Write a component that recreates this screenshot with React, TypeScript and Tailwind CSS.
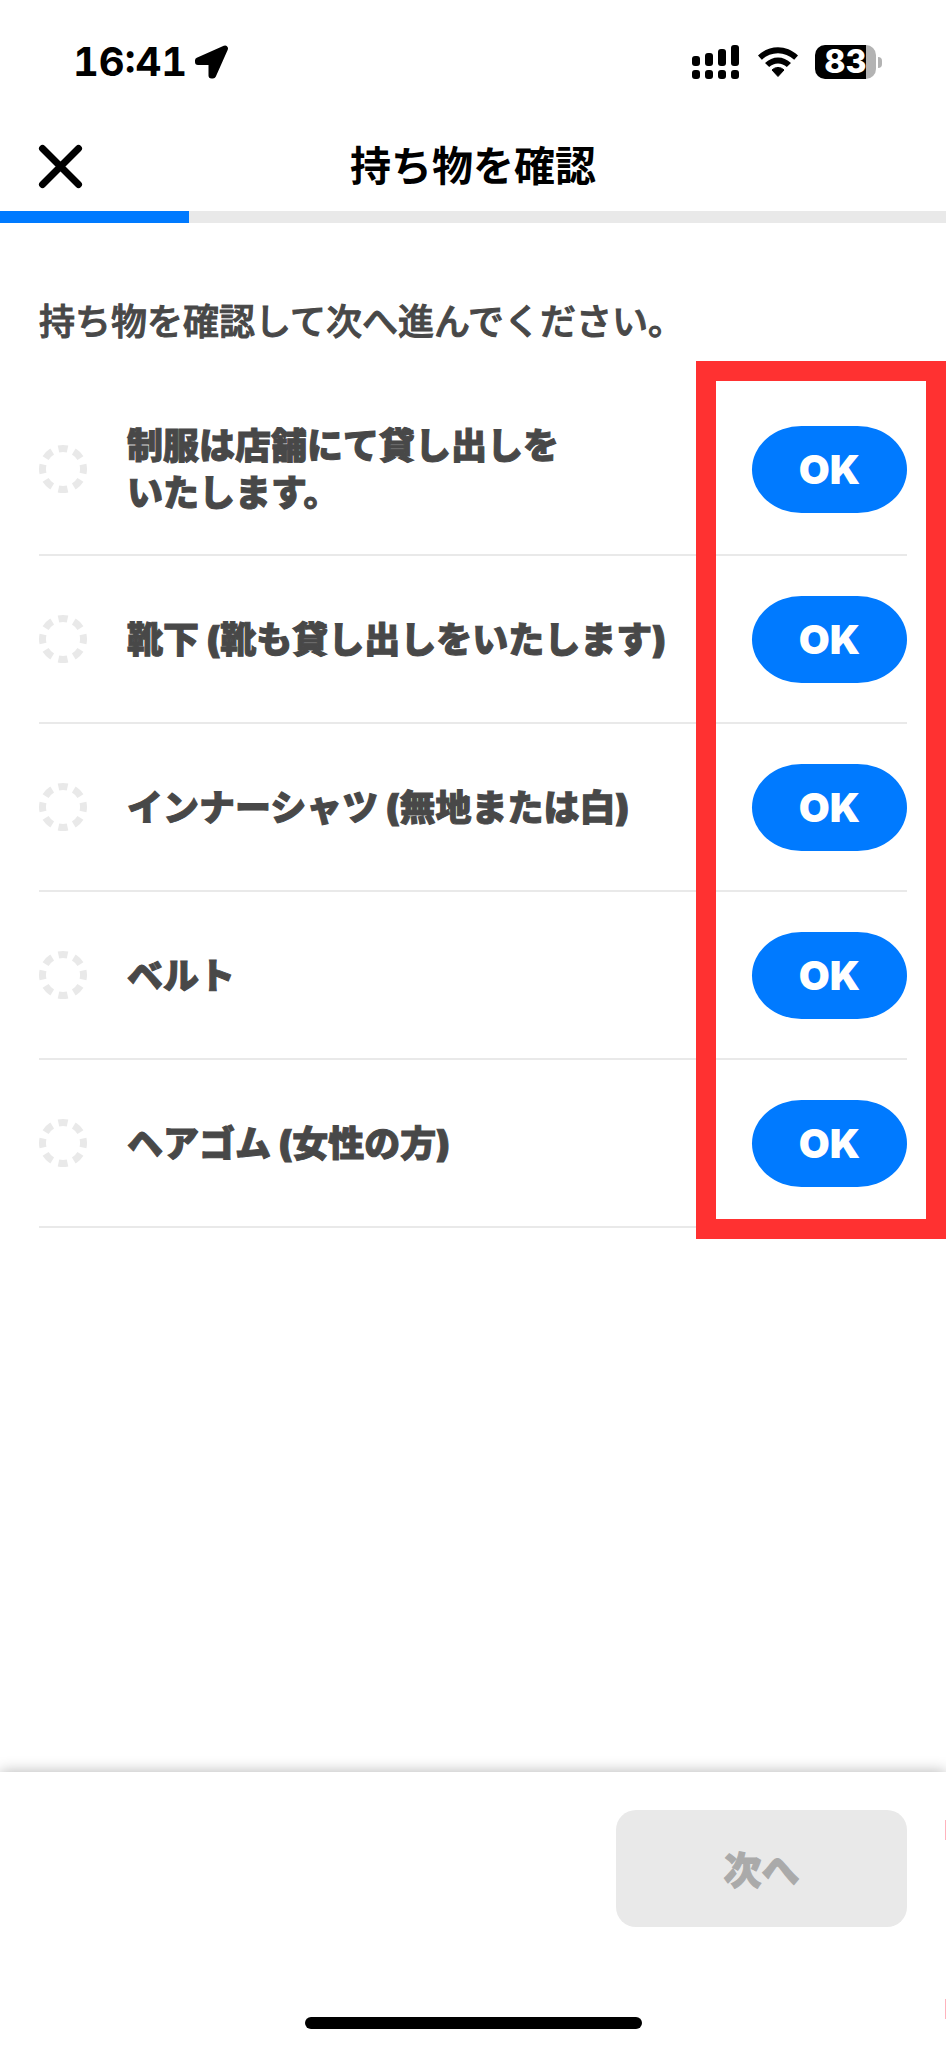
import { useState } from "react";

const items = [
  ["制服は店舗にて貸し出しを", "いたします。"],
  ["靴下 (靴も貸し出しをいたします)"],
  ["インナーシャツ (無地または白)"],
  ["ベルト"],
  ["ヘアゴム (女性の方)"],
];

function StatusBar() {
  return (
    <div className="flex h-[124px] items-center justify-between pr-16 pl-[73px]">
      <div className="flex items-center gap-[6px]">
        <span className="text-[40px] leading-none font-bold tabular-nums">16:41</span>
        <svg width="36" height="36" viewBox="0 0 36 36" aria-hidden="true">
          <path
            d="M32 4.500 L20 31.500 L18.500 31.500 L18.500 18 L5 18 L5 16.500 Z"
            stroke="black"
            strokeWidth="6"
            strokeLinejoin="round"
          />
        </svg>
      </div>
      <div className="flex items-center gap-4">
        <svg width="49" height="34" viewBox="0 0 49 34" aria-hidden="true">
          <rect x="0" y="11" width="8" height="10" rx="3" />
          <rect x="13" y="8" width="8" height="13" rx="3" />
          <rect x="26" y="4" width="8" height="17" rx="3" />
          <rect x="39" y="0" width="8" height="21" rx="3" />
          <rect x="0" y="25" width="8" height="9" rx="3" />
          <rect x="13" y="25" width="8" height="9" rx="3" />
          <rect x="26" y="25" width="8" height="9" rx="3" />
          <rect x="39" y="25" width="8" height="9" rx="3" />
        </svg>
        <svg width="42" height="32" viewBox="0 0 42 32" aria-hidden="true">
          <path d="M1 9.500 C12.500 -1.500 29.500 -1.500 41 9.500 L37.200 13.800 C28 5 14 5 4.800 13.800 Z" />
          <path d="M8 17 C15.500 9.500 26.500 9.500 34 17 L29.800 21 C25 16.300 17 16.300 12.200 21 Z" />
          <path d="M15 24 C18.500 20.600 23.500 20.600 27 24 L21 30.500 Z" strokeWidth="1" stroke="black" strokeLinejoin="round" />
        </svg>
        <div className="flex items-center gap-[2px]">
          <span className="flex h-[34px] w-[61px] items-center justify-center rounded-[10px] bg-[linear-gradient(to_right,#000_51px,#b3b3b3_51px)] text-[32px] leading-[34px] font-extrabold text-white">
            83
          </span>
          <span className="h-[11px] w-1 rounded-r-full bg-[#b3b3b3]" />
        </div>
      </div>
    </div>
  );
}

export default function App() {
  const [checked, setChecked] = useState<number[]>([]);
  return (
    <div className="flex min-h-screen flex-col overflow-x-hidden bg-white font-['Inter','Noto_Sans_CJK_JP',sans-serif] text-black">
      <header>
        <StatusBar />
        <div className="grid h-[87px] grid-cols-[1fr_auto_1fr] items-center px-[38px] pb-[3px]">
          <button type="button" aria-label="閉じる" className="w-[45px]">
            <svg width="45" height="45" viewBox="0 0 45 45" aria-hidden="true">
              <path d="M4.500 4.500 L40.500 40.500 M40.500 4.500 L4.500 40.500" stroke="black" strokeWidth="7" strokeLinecap="round" />
            </svg>
          </button>
          <h1 className="text-[41px] leading-none font-bold">持ち物を確認</h1>
        </div>
        <div className="h-3 bg-[#e9e9e9]">
          <div className="h-full w-1/5 bg-[#007aff]" />
        </div>
      </header>

      <main className="pb-16 text-[36px] text-[#484848]">
        <p className="px-[39px] pt-[75px] leading-[48px] font-medium [-webkit-text-stroke:1px_#484848]">
          持ち物を確認して次へ進んでください。
        </p>
        <div className="relative mt-[38px]">
          <ul className="px-[39px]">
            {items.map((lines, i) => (
              <li
                key={i}
                className="flex min-h-[168px] items-center border-b-2 border-[#e9e9e9] font-black first:min-h-[172px]"
              >
                <svg className="shrink-0" width="48" height="48" viewBox="0 0 48 48" aria-hidden="true">
                  <circle
                    cx="24"
                    cy="24"
                    r="20.500"
                    fill="none"
                    stroke="#e9e9e9"
                    strokeWidth="7"
                    pathLength="80"
                    strokeDasharray="5.800 4.200"
                    strokeDashoffset="2.900"
                  />
                </svg>
                <p className="ml-10 flex-1 pt-[2px] leading-[47px] [-webkit-text-stroke:1px_#484848]">
                  {lines.map((line) => (
                    <span key={line} className="block whitespace-nowrap">
                      {line}
                    </span>
                  ))}
                </p>
                <button
                  type="button"
                  aria-pressed={checked.includes(i)}
                  onClick={() => setChecked([...checked, i])}
                  className="h-[87px] w-[155px] shrink-0 rounded-[50px/44px] bg-[#007aff] pt-[2px] text-[40px] leading-none font-black text-white"
                >
                  OK
                </button>
              </li>
            ))}
          </ul>
          <div className="pointer-events-none absolute -top-[23px] right-0 -bottom-[11px] w-[250px] border-20 border-[#ff3131]" />
        </div>
      </main>

      <footer className="relative mt-auto flex flex-col bg-white px-[39px] pt-[38px] pb-[19px] shadow-[0_0_14px_rgba(0,0,0,0.3)]">
        <button
          type="button"
          disabled={checked.length < items.length}
          className="h-[117px] w-[291px] self-end rounded-[20px] bg-[#e9e9e9] pt-[2px] text-[38px] leading-none font-black text-[#aaaaaa] [-webkit-text-stroke:1px_currentColor]"
        >
          次へ
        </button>
        <div className="mt-[90px] h-3 w-[337px] self-center rounded-full bg-black" />
        <span className="absolute top-12 right-0 h-5 w-px bg-[#ffb3bd]" />
        <span className="absolute right-0 bottom-[29px] h-5 w-px bg-[#ffb3bd]" />
      </footer>
    </div>
  );
}
